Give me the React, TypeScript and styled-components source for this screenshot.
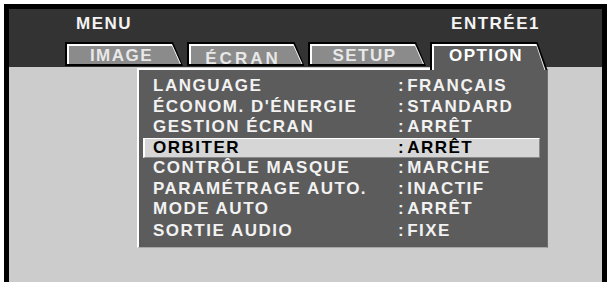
import * as React from 'react';
import styled, { createGlobalStyle } from 'styled-components';

const GlobalStyle = createGlobalStyle`
  html,
  body {
    margin: 0;
    padding: 0;
    background: #fff;
    overflow: hidden;
  }
  body {
    font-family: 'Liberation Sans', Arial, sans-serif;
  }
`;

const Frame = styled.div`
  margin: 4px 0 0 4px;
  width: 603px;
  height: 290px;
  box-sizing: border-box;
  border: 5px solid #000;
  border-bottom: none;
  background: #cccccc;
  display: flex;
  flex-direction: column;
`;

const Header = styled.div`
  height: 58px;
  box-sizing: border-box;
  padding-top: 5px;
  background: #333333;
  display: flex;
  flex-direction: column;
`;

const TitleRow = styled.div`
  display: flex;
  justify-content: space-between;
  padding: 0 62px 0 67px;
  font-size: 17px;
  font-weight: 700;
  line-height: 20px;
  letter-spacing: 1.5px;
  color: #f4f4f4;
`;

const TabRow = styled.div`
  display: flex;
  align-items: flex-start;
  gap: 3.5px;
  margin-top: 8px;
  padding-left: 56px;
`;

const Tab = styled.div<{ $active?: boolean }>`
  position: relative;
  z-index: 2;
  width: 118px;
  height: ${p => (p.$active ? 28 : 24)}px;
  margin-bottom: ${p => (p.$active ? -4 : 0)}px;
  background: #000;
  clip-path: polygon(0 0, calc(100% - 10px) 0, 100% 100%, 0 100%);
  display: flex;
  justify-content: center;
  padding-right: 5px;
  box-sizing: border-box;
  &::before,
  &::after {
    content: '';
    position: absolute;
    z-index: 0;
  }
  &::before {
    top: 2px;
    left: 2px;
    right: 2px;
    bottom: ${p => (p.$active ? 0 : 2)}px;
    background: #ffffff;
    clip-path: polygon(0 0, calc(100% - 9px) 0, 100% 100%, 0 100%);
  }
  &::after {
    top: 4px;
    left: 4px;
    right: 3px;
    bottom: ${p => (p.$active ? 0 : 2)}px;
    background: ${p => (p.$active ? '#5c5c5c' : '#8b8b8b')};
    clip-path: polygon(0 0, calc(100% - 8px) 0, 100% 100%, 0 100%);
  }
`;

const TabLabel = styled.span<{ $drop?: number; $spread?: number; $active?: boolean }>`
  position: relative;
  z-index: 1;
  padding-top: ${p => 3.5 + (p.$drop || 0)}px;
  font-size: 17px;
  font-weight: 700;
  line-height: 20px;
  letter-spacing: ${p => p.$spread || 1.5}px;
  color: ${p => (p.$active ? '#ffffff' : '#e8e8e8')};
`;

const Body = styled.div`
  flex: 1;
  padding: 1px 0 0 128px;
`;

const Panel = styled.div`
  position: relative;
  z-index: 1;
  width: 411px;
  height: 180px;
  box-sizing: border-box;
  padding: 6px 7px 0 4px;
  background: #5c5c5c;
  border-top: 2px solid #fff;
  border-left: 2px solid #fff;
  border-right: 1px solid #6e6e6e;
  border-bottom: 1px solid #a8a8a8;
`;

const Row = styled.div<{ $selected?: boolean; $last?: boolean }>`
  display: grid;
  grid-template-columns: 245px 1fr;
  height: 20.5px;
  box-sizing: border-box;
  margin-top: ${p => (p.$last ? 1.5 : 0)}px;
  padding-left: ${p => (p.$selected ? 8 : 10)}px;
  font-size: 17px;
  font-weight: 700;
  letter-spacing: 1.5px;
  white-space: nowrap;
  line-height: ${p => (p.$selected ? 18.5 : 20.5)}px;
  color: ${p => (p.$selected ? '#000' : '#f2f2f2')};
  background: ${p => (p.$selected ? '#d6d6d6' : 'transparent')};
  border-style: solid;
  border-width: ${p => (p.$selected ? '1px 1px 1px 2px' : '0')};
  border-color: #fff #8a8a8a #8a8a8a #fff;
`;

const Colon = styled.span`
  margin-right: 2px;
`;

const tabs = [
  { label: 'IMAGE' },
  { label: 'ÉCRAN', drop: 3, spread: 3 },
  { label: 'SETUP' },
  { label: 'OPTION', active: true },
];

const items = [
  ['LANGUAGE', 'FRANÇAIS'],
  ["ÉCONOM. D'ÉNERGIE", 'STANDARD'],
  ['GESTION ÉCRAN', 'ARRÊT'],
  ['ORBITER', 'ARRÊT'],
  ['CONTRÔLE MASQUE', 'MARCHE'],
  ['PARAMÉTRAGE AUTO.', 'INACTIF'],
  ['MODE AUTO', 'ARRÊT'],
  ['SORTIE AUDIO', 'FIXE'],
];

const App: React.FC = () => {
  const selected = 3;
  return (
    <>
      <GlobalStyle />
      <Frame>
        <Header>
          <TitleRow>
            <span>MENU</span>
            <span>ENTRÉE1</span>
          </TitleRow>
          <TabRow>
            {tabs.map(t => (
              <Tab key={t.label} $active={t.active}>
                <TabLabel $drop={t.drop} $spread={t.spread} $active={t.active}>
                  {t.label}
                </TabLabel>
              </Tab>
            ))}
          </TabRow>
        </Header>
        <Body>
          <Panel>
            {items.map(([name, value], i) => (
              <Row
                key={name}
                $selected={i === selected}
                $last={i === items.length - 1}
              >
                <span>{name}</span>
                <span>
                  <Colon>:</Colon>
                  {value}
                </span>
              </Row>
            ))}
          </Panel>
        </Body>
      </Frame>
    </>
  );
};

export default App;
